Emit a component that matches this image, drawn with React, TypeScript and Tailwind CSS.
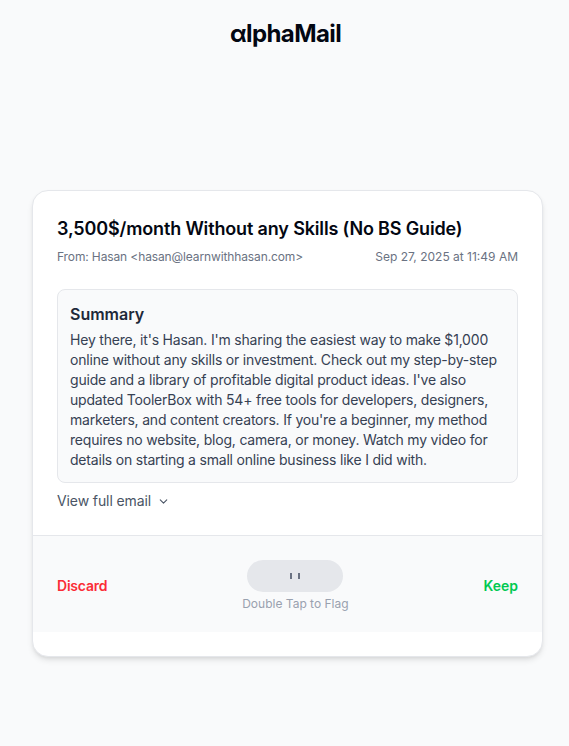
import { ChevronDown } from 'lucide-react';

export default function App() {
  return (
    <div className="min-h-[746px] bg-gray-50 font-['Inter',sans-serif] pt-5">
      <h1 className="text-center text-2xl leading-7 font-bold text-gray-950 tracking-tight pl-0.5">αlphaMail</h1>

      <div className="mt-[142px] pl-8">
        <div className="w-[511px] bg-white rounded-2xl border border-gray-200 shadow-md overflow-hidden pb-6">
          <div className="px-6 pt-6 pb-6">
            <h2 className="text-lg leading-7 font-semibold text-gray-950 tracking-[-0.15px]">
              3,500$/month Without any Skills (No BS Guide)
            </h2>
            <div className="mt-1.5 flex justify-between text-xs leading-4 text-gray-500">
              <span className="tracking-[-0.12px]">From: Hasan &lt;hasan@learnwithhasan.com&gt;</span>
              <span>Sep 27, 2025 at 11:49 AM</span>
            </div>

            <div className="mt-6 rounded-lg border border-gray-200 bg-gray-50 p-3">
              <h3 className="text-base leading-6 font-semibold text-gray-800">Summary</h3>
              <p className="mt-1 text-sm leading-5 text-gray-700 tracking-[-0.2px]">
                Hey there, it's Hasan. I'm sharing the easiest way to make $1,000 online without any skills or investment. Check out my step-by-step guide and a library of profitable digital product ideas. I've also updated ToolerBox with 54+ free tools for developers, designers, marketers, and content creators. If you're a beginner, my method requires no website, blog, camera, or money. Watch my video for details on starting a small online business like I did with.
              </p>
            </div>

            <button className="mt-2 flex items-center gap-1.5 text-sm leading-5 text-gray-600 tracking-[-0.1px]">
              View full email
              <ChevronDown size={13} strokeWidth={2} />
            </button>
          </div>

          <div className="border-t border-gray-200 bg-gray-50 px-6 pt-6 pb-5 flex items-center justify-between">
            <button className="text-sm font-semibold text-red-500 tracking-[-0.2px]">Discard</button>
            <div className="flex flex-col items-center">
              <div className="w-24 h-8 rounded-full bg-gray-200 flex items-center justify-center gap-1.5">
                <span className="block w-[2px] h-[6px] bg-gray-500"></span>
                <span className="block w-[2px] h-[6px] bg-gray-500"></span>
              </div>
              <span className="mt-1 text-xs leading-4 text-gray-400">Double Tap to Flag</span>
            </div>
            <button className="text-sm font-semibold text-green-500">Keep</button>
          </div>
        </div>
      </div>
    </div>
  );
}
